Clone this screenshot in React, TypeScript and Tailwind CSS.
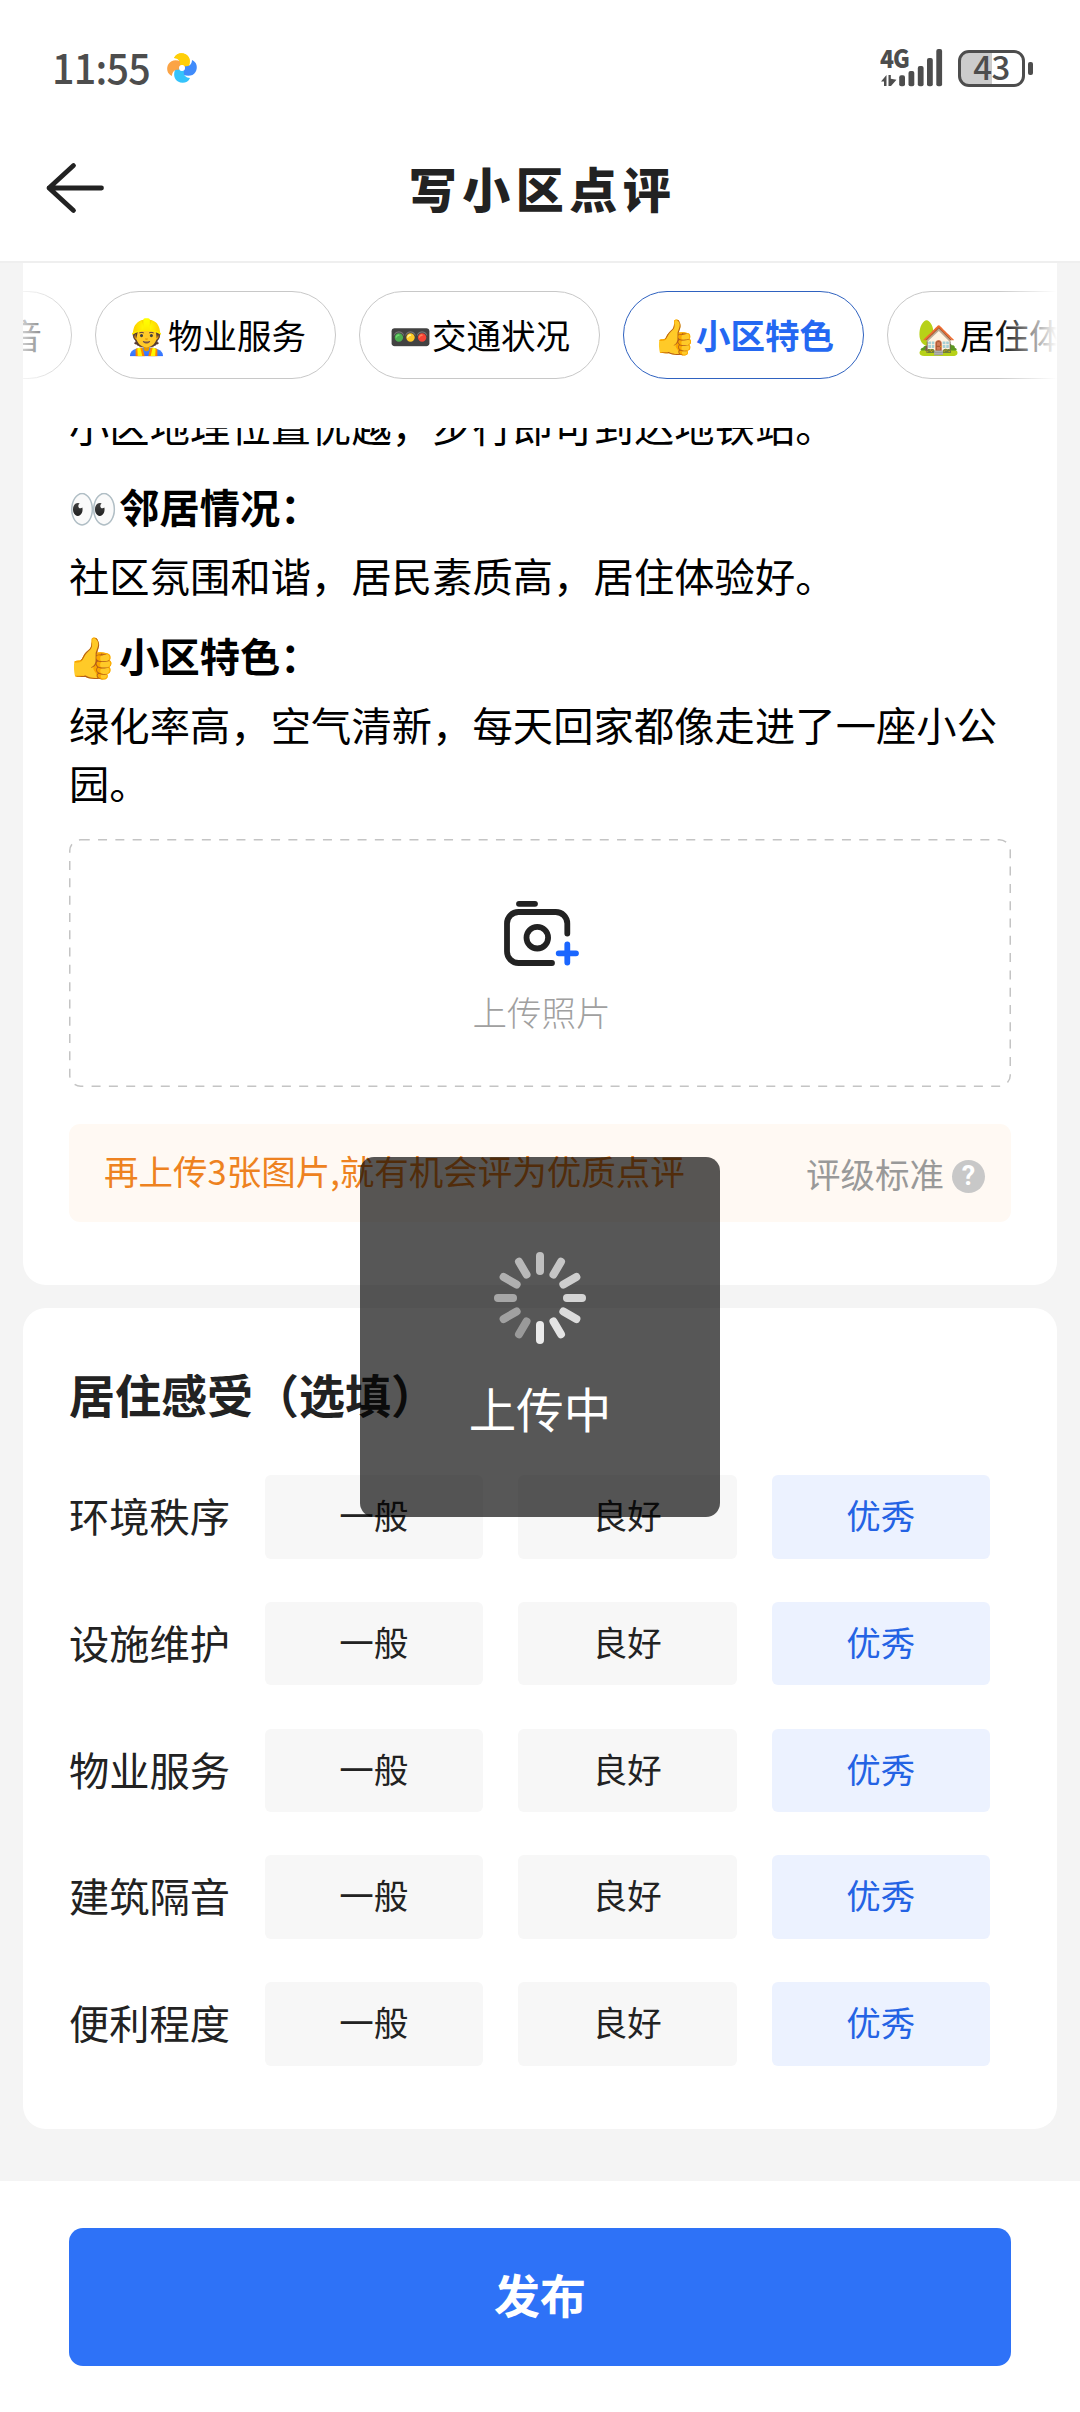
import React from "react";

const topics = [
  { icon: "🔇", label: "建筑隔音" },
  { icon: "👷", label: "物业服务" },
  { icon: "🚥", label: "交通状况" },
  { icon: "👍", label: "小区特色", active: true },
  { icon: "🏡", label: "居住体验" },
];

const ratings = ["环境秩序", "设施维护", "物业服务", "建筑隔音", "便利程度"];

function PinwheelIcon() {
  return (
    <svg width="32" height="32" viewBox="-16 -16 32 32">
      <path d="M-8-10C-6-15 0-16 4-13.5C8-11 9-6 6.5-1L3 2C3-2 1-3.5-2-3C-1-7-4-10-8-10Z" fill="#ffcf08" />
      <path d="M10-8C15-6 16 0 13.5 4C11 8 6 9 1 6.5L-2 3C2 3 3.5 1 3-2C7-1 10-4 10-8Z" fill="#3f8bfb" />
      <path d="M8 10C6 15 0 16-4 13.5C-8 11-9 6-6.5 1L-3-2C-3 2-1 3.5 2 3C1 7 4 10 8 10Z" fill="#35c3fb" />
      <path d="M-10 8C-15 6-16 0-13.5-4C-11-8-6-9-1-6.5L2-3C-2-3-3.5-1-3 2C-7 1-10 4-10 8Z" fill="#fba446" />
      <path d="M-8-10C-6-15 0-16 4-13.5C8-11 8.5-7 7-3L-2-3C-1-7-4-10-8-10Z" fill="#ffcf08" />
      <circle r="2.9" fill="#fff" />
    </svg>
  );
}

function SignalIcon() {
  return (
    <svg width="64" height="40" viewBox="880 48 64 40" fill="#4d4d4d">
      <path d="M881 81.5 886.5 75V86H884V81.5ZM888.5 75H890.8V78.8L896.5 79.8 891 86H888.5Z" />
      <rect x="899.2" y="75.3" width="5.8" height="11" rx="2" />
      <rect x="908.5" y="71" width="5.8" height="15.3" rx="2" />
      <rect x="917.8" y="66" width="5.8" height="20.3" rx="2" />
      <rect x="927" y="58" width="5.8" height="28.3" rx="2" />
      <rect x="936.3" y="49" width="5.8" height="37.3" rx="2" />
    </svg>
  );
}

function CameraIcon() {
  return (
    <svg width="76" height="68" viewBox="503 899 76 68" fill="none" strokeWidth="5.8" strokeLinecap="round">
      <g stroke="#222">
        <path d="M519 903.8H535" />
        <path d="M567.3 933.6V923.5A11.5 11.5 0 0 0 555.8 912H518.5A11.5 11.5 0 0 0 507 923.5V951.5A11.5 11.5 0 0 0 518.5 963H552" />
        <circle cx="537.3" cy="937.7" r="10.8" />
      </g>
      <path d="M558.7 953.3H576M567.3 944.3V962.6" stroke="#1a66ff" />
    </svg>
  );
}

function Spinner() {
  return (
    <svg width="94" height="94" viewBox="-47 -47 94 94" stroke="#fff" strokeWidth="8" strokeLinecap="round">
      {Array.from({ length: 12 }, (_, i) => (
        <path key={i} d="M0 27V42" transform={`rotate(${30 + i * 30})`} opacity={0.4 + i * 0.044} />
      ))}
    </svg>
  );
}

export default function App() {
  return (
    <div className="relative flex h-[2412px] w-[1080px] flex-col overflow-hidden bg-white font-['Noto_Sans_CJK_SC','Noto_Color_Emoji',sans-serif] text-[40.25px] leading-[57.5px] text-black">
      <header className="h-[263px] shrink-0 border-b-2 border-[#efefef]">
        <div className="flex h-[115px] items-center justify-between pl-[52px] pr-[47px] pt-[21px] text-[#4d4d4d]">
          <div className="flex items-center">
            <span className="w-[114px] origin-left scale-x-[0.94] pb-[4px] text-[42px] font-medium leading-[44px] tracking-[-0.8px]">11:55</span>
            <PinwheelIcon />
          </div>
          <div className="flex items-center">
            <div className="relative mr-[14px]">
              <SignalIcon />
              <span className="absolute left-0 top-[-3px] origin-left scale-x-[0.92] text-[25px] font-black leading-[24px] tracking-[-1px]">4G</span>
            </div>
            <div className="flex h-[37px] w-[67px] items-center justify-center rounded-[11px] border-[3px] border-[#4d4d4d] bg-linear-to-r from-[#ccc] from-50% to-white to-50% pb-[4px] text-[33px] font-medium leading-[34px] tracking-[-0.5px]">
              43
            </div>
            <div className="ml-[3px] h-[13px] w-[5px] rounded-[2px] bg-[#4d4d4d]" />
          </div>
        </div>
        <div className="grid h-[146px] grid-cols-[1fr_auto_1fr] items-center pl-[44px]">
          <svg width="62" height="54" viewBox="44 161 62 54" fill="none" stroke="#222" strokeWidth="4.8" strokeLinecap="round" strokeLinejoin="round">
            <path d="M101.5 188H49M73.5 165.5 49 188 73.5 210.5" />
          </svg>
          <h1 className="pb-[3px] pr-[39px] text-[48px] font-black leading-[60px] tracking-[5.5px] text-[#222]">写小区点评</h1>
        </div>
      </header>

      <main className="flex h-[1918px] shrink-0 flex-col gap-[23px] bg-[#f4f4f4] px-[23px]">
        <section className="h-[1022px] rounded-b-[23px] bg-white">
          <div className="relative overflow-hidden pt-[28px]">
            <nav className="ml-[-192px] flex w-max gap-[23px]">
              {topics.map((t) => (
                <div
                  key={t.label}
                  className={
                    t.active
                      ? "flex h-[88px] w-[241px] items-center justify-center whitespace-nowrap rounded-full border border-[#2f62c0] text-[34.5px] font-bold text-[#2468f2]"
                      : "flex h-[88px] w-[241px] items-center justify-center whitespace-nowrap rounded-full border border-[#c8c8c8] text-[34.5px]"
                  }
                >
                  <span>{t.icon}</span>
                  <span>{t.label}</span>
                </div>
              ))}
            </nav>
            <div className="absolute inset-y-0 left-0 w-[60px] bg-linear-to-r from-white/80 to-white/0" />
            <div className="absolute inset-y-0 right-0 w-[60px] bg-linear-to-l from-white to-white/0" />
          </div>

          <div className="mx-[46px] mt-[49px] h-[411px] overflow-hidden">
            <p className="-mt-[32px] h-[57.5px] whitespace-nowrap tracking-[0.1px]">小区地理位置优越，步行即可到达地铁站。</p>
            <h2 className="mt-[23px] flex h-[57.5px] font-bold"><span className="-ml-px mr-px">👀</span>邻居情况：</h2>
            <p className="mt-[12px] h-[57.5px] whitespace-nowrap tracking-[0.1px]">社区氛围和谐，居民素质高，居住体验好。</p>
            <h2 className="mt-[22px] flex h-[57.5px] font-bold"><span className="-ml-[2px] mr-[2px]">👍</span>小区特色：</h2>
            <p className="mt-[12px] tracking-[0.1px]">绿化率高，空气清新，每天回家都像走进了一座小公园。</p>
          </div>

          <div className="relative mx-[46px] flex h-[248px] flex-col items-center pt-[60px]">
            <svg className="absolute inset-0" width="942" height="248" fill="none">
              <rect x="0.75" y="0.75" width="940.5" height="246.5" rx="11" stroke="#c4c4c4" strokeWidth="1.5" strokeDasharray="9 8.3" />
            </svg>
            <div className="ml-[2px]"><CameraIcon /></div>
            <span className="ml-[3px] mt-[16px] text-[34.5px] font-light text-[#a0a0a0]">上传照片</span>
          </div>

          <div className="mx-[46px] mt-[37px] flex h-[98px] items-center justify-between rounded-[11px] bg-[#fff9f3] pl-[35px] pr-[26px] text-[34.5px]">
            <span className="-mt-[4px] whitespace-nowrap text-[#ee8220]">再上传3张图片,就有机会评为优质点评</span>
            <span className="flex items-center pt-[2px] text-[#999]">
              评级标准
              <span className="ml-[8px] mt-[4px] flex size-[33px] items-center justify-center rounded-full bg-[#c8c8c8] font-['Roboto'] text-[27px] font-bold leading-[33px] text-white">?</span>
            </span>
          </div>
        </section>

        <section className="h-[821px] rounded-[23px] bg-white pl-[46px] pt-[56px]">
          <h2 className="text-[46px] font-bold leading-[58px] text-[#222]">居住感受（选填）</h2>
          <div className="mt-[53px] flex flex-col gap-[43.3px] text-[#222]">
            {ratings.map((name) => (
              <div key={name} className="flex h-[83.5px] items-center">
                <span className="w-[195.5px] pb-[4px]">{name}</span>
                <div className="flex gap-[35px] text-center text-[34.5px] leading-[79px]">
                  <span className="h-[83.5px] w-[218.5px] rounded-[6px] bg-[#f7f7f7]">一般</span>
                  <span className="h-[83.5px] w-[218.5px] rounded-[6px] bg-[#f7f7f7]">良好</span>
                  <span className="h-[83.5px] w-[218.5px] rounded-[6px] bg-[#ecf2ff] text-[#2463e4]">优秀</span>
                </div>
              </div>
            ))}
          </div>
        </section>
      </main>

      <footer className="grow bg-white px-[69px] pt-[47px]">
        <button className="h-[138px] w-full rounded-[14px] bg-[#2e72f7] pb-[6px] text-[46px] font-bold text-white">发布</button>
      </footer>

      <div className="absolute left-[360px] top-[1157px] flex size-[360px] flex-col items-center rounded-[14px] bg-black/66 pt-[94px] text-white">
        <Spinner />
        <span className="mt-[34px] text-[47.5px] leading-[58px]">上传中</span>
      </div>
    </div>
  );
}
